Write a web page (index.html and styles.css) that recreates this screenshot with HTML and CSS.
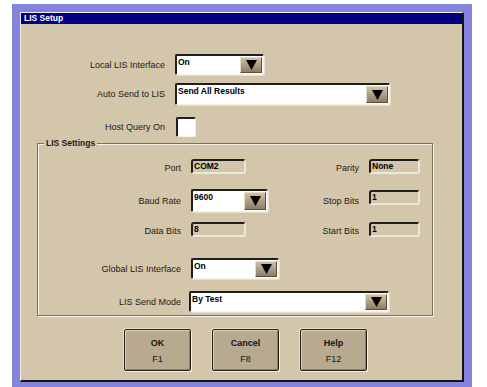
FILE: index.html
```html
<!DOCTYPE html>
<html lang="en">

<head>
    <meta charset="UTF-8">
    <meta name="viewport" content="width=device-width, initial-scale=1.0">
    <title>LIS Setup</title>
    <link rel="stylesheet" href="styles.css">
</head>

<body>
    <div class="screen">
        <div class="dialog">
            <div class="title-bar">LIS Setup</div>
            <div class="dialog-body">
                <div class="top-fields">
                    <div class="field-row row-local">
                        <span class="field-label">Local LIS Interface</span>
                        <div class="combo combo-short">
                            <span class="combo-value">On</span>
                            <span class="combo-button"><svg width="11" height="10" viewBox="0 0 11 10"><polygon points="0,0 11,0 5.5,10" fill="#000"/></svg></span>
                        </div>
                    </div>
                    <div class="field-row row-auto">
                        <span class="field-label">Auto Send to LIS</span>
                        <div class="combo combo-long">
                            <span class="combo-value">Send All Results</span>
                            <span class="combo-button"><svg width="11" height="10" viewBox="0 0 11 10"><polygon points="0,0 11,0 5.5,10" fill="#000"/></svg></span>
                        </div>
                    </div>
                    <div class="field-row row-host">
                        <span class="field-label">Host Query On</span>
                        <div class="checkbox"></div>
                    </div>
                </div>

                <div class="group">
                    <span class="group-title">LIS Settings</span>
                    <div class="group-row row-port">
                        <span class="field-label">Port</span>
                        <div class="readonly">COM2</div>
                        <span class="field-label">Parity</span>
                        <div class="readonly readonly-right">None</div>
                    </div>
                    <div class="group-row row-baud">
                        <span class="field-label">Baud Rate</span>
                        <div class="combo combo-baud">
                            <span class="combo-value">9600</span>
                            <span class="combo-button"><svg width="11" height="10" viewBox="0 0 11 10"><polygon points="0,0 11,0 5.5,10" fill="#000"/></svg></span>
                        </div>
                        <span class="field-label">Stop Bits</span>
                        <div class="readonly readonly-right readonly-stop">1</div>
                    </div>
                    <div class="group-row row-data">
                        <span class="field-label">Data Bits</span>
                        <div class="readonly">8</div>
                        <span class="field-label">Start Bits</span>
                        <div class="readonly readonly-right">1</div>
                    </div>
                    <div class="group-row row-global">
                        <span class="field-label">Global LIS Interface</span>
                        <div class="combo combo-global">
                            <span class="combo-value">On</span>
                            <span class="combo-button"><svg width="11" height="10" viewBox="0 0 11 10"><polygon points="0,0 11,0 5.5,10" fill="#000"/></svg></span>
                        </div>
                    </div>
                    <div class="group-row row-mode">
                        <span class="field-label">LIS Send Mode</span>
                        <div class="combo combo-mode">
                            <span class="combo-value">By Test</span>
                            <span class="combo-button"><svg width="11" height="10" viewBox="0 0 11 10"><polygon points="0,0 11,0 5.5,10" fill="#000"/></svg></span>
                        </div>
                    </div>
                </div>

                <div class="button-row">
                    <button class="dialog-button"><b>OK</b><span>F1</span></button>
                    <button class="dialog-button"><b>Cancel</b><span>F8</span></button>
                    <button class="dialog-button"><b>Help</b><span>F12</span></button>
                </div>
            </div>
        </div>
    </div>
</body>

</html>
```

FILE: styles.css
```css
body {
    margin: 0;
    background-color: #ffffff;
    font-family: "Liberation Sans", Arial, sans-serif;
    font-size: 9px;
    color: #1a1a1a;
}

.screen {
    margin: 4px 0 0 12px;
    width: 460px;
    height: 383px;
    padding: 8px 0 0 8px;
    box-sizing: border-box;
    background-color: #8484dc;
}

.dialog {
    width: 444px;
    height: 370px;
    box-sizing: border-box;
    background-color: #d4c6aa;
    border-top: 1px solid #f2eee4;
    border-left: 1px solid #f2eee4;
    border-right: 2px solid #141414;
    border-bottom: 2px solid #141414;
    display: flex;
    flex-direction: column;
}

.title-bar {
    height: 11px;
    line-height: 11px;
    background-color: #000080;
    color: #ffffff;
    font-weight: bold;
    font-size: 8.5px;
    padding-left: 3px;
}

.dialog-body {
    display: flex;
    flex-direction: column;
    padding-top: 30px;
}

/* top rows */

.top-fields {
    display: flex;
    flex-direction: column;
}

.field-row {
    display: grid;
    grid-template-columns: 144px auto;
    column-gap: 10px;
    align-items: center;
}

.row-auto {
    margin-top: 8px;
}

.row-host {
    margin-top: 12px;
}

.field-label {
    text-align: right;
    white-space: nowrap;
}

/* combo boxes */

.combo {
    display: flex;
    justify-content: space-between;
    box-sizing: border-box;
    background-color: #ffffff;
    border-top: 2px solid #1e1e1e;
    border-left: 2px solid #1e1e1e;
    border-right: 1px solid #f4f0e6;
    border-bottom: 1px solid #f4f0e6;
    border-radius: 2px;
    box-shadow: 1px 1px 0 #e8e0cc;
}

.combo-value {
    font-weight: bold;
    font-size: 8.5px;
    color: #000000;
    padding: 1px 0 0 1px;
    white-space: nowrap;
}

.combo-button {
    width: 20px;
    margin: 1px 1px 1px 0;
    display: flex;
    align-items: center;
    justify-content: center;
    background: linear-gradient(#cfc1a6, #a8987e 60%, #8c7d64);
    border-top: 1px solid #e6dcc6;
    border-left: 1px solid #e6dcc6;
    border-right: 1px solid #5a4e3c;
    border-bottom: 1px solid #5a4e3c;
}

.combo-short {
    width: 89px;
    height: 21px;
}

.combo-long {
    width: 215px;
    height: 22px;
}

.combo-baud {
    width: 77px;
    height: 23px;
}

.combo-global {
    width: 88px;
    height: 21px;
}

.combo-mode {
    width: 200px;
    height: 21px;
    margin-left: -2px;
}

.checkbox {
    width: 20px;
    height: 20px;
    box-sizing: border-box;
    background-color: #ffffff;
    border-top: 2px solid #1e1e1e;
    border-left: 2px solid #1e1e1e;
    border-right: 1px solid #f4f0e6;
    border-bottom: 1px solid #f4f0e6;
    border-radius: 2px;
    margin-left: 1px;
}

/* group box */

.group {
    position: relative;
    margin: 6px 0 0 16px;
    width: 396px;
    box-sizing: border-box;
    border: 1px solid #7a705e;
    box-shadow: 1px 1px 0 #f6f2ea, inset 1px 1px 0 #f6f2ea;
    padding: 15px 0 3px 0;
    display: flex;
    flex-direction: column;
}

.group-title {
    position: absolute;
    left: 6px;
    top: -6px;
    padding: 0 2px;
    background-color: #d4c6aa;
    font-weight: bold;
    font-size: 8.5px;
    line-height: 11px;
}

.group-row {
    display: grid;
    grid-template-columns: 143px 88px 70px 51px;
    column-gap: 10px;
    align-items: center;
}

.row-port .field-label,
.row-data .field-label {
    padding-top: 2px;
}

.row-baud {
    margin-top: 15px;
}

.row-data {
    margin-top: 10px;
}

.row-global {
    margin-top: 21px;
}

.row-mode {
    margin-top: 12px;
}

.row-mode .combo-mode {
    grid-column: 2 / span 3;
}

.readonly {
    width: 55px;
    height: 15px;
    box-sizing: border-box;
    border-top: 2px solid #1e1e1e;
    border-left: 2px solid #1e1e1e;
    border-right: 2px solid #eee8da;
    border-bottom: 2px solid #eee8da;
    border-radius: 3px;
    font-weight: bold;
    font-size: 8.5px;
    color: #000000;
    line-height: 10px;
    padding-left: 1px;
    white-space: nowrap;
}

.readonly-right {
    width: 51px;
}

.readonly-stop {
    align-self: start;
    margin-top: 1px;
}

/* buttons */

.button-row {
    display: flex;
    gap: 21px;
    margin: 13px 0 0 103px;
}

.dialog-button {
    width: 67px;
    height: 42px;
    box-sizing: border-box;
    background-color: #b8aa90;
    border: 1px solid #2a2418;
    border-radius: 2px;
    box-shadow: 1px 1px 0 #f6f0e2, -1px -1px 0 #e6dcc8, inset 1px 1px 0 #ddd0b8, inset -1px -1px 0 #8c7e66;
    display: flex;
    flex-direction: column;
    align-items: center;
    justify-content: center;
    gap: 6px;
    padding: 2px 0 0 0;
    font-family: "Liberation Sans", Arial, sans-serif;
    font-size: 9px;
    color: #141414;
}

.dialog-button b {
    font-size: 9px;
}
```
